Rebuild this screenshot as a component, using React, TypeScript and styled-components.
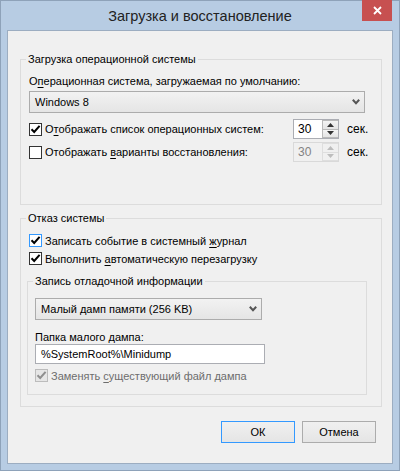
import styled, { createGlobalStyle } from "styled-components";

const GlobalStyle = createGlobalStyle`
  html, body {
    margin: 0;
    padding: 0;
    background: #ffffff;
  }
  body {
    font-family: "Liberation Sans", Arial, sans-serif;
    font-size: 11px;
    color: #000;
  }
  u {
    text-decoration-thickness: 1px;
    text-underline-offset: 2px;
  }
`;

const Window = styled.div`
  width: 400px;
  height: 471px;
  box-sizing: border-box;
  border: 1px solid #8ea2b9;
  background: #b7cce3;
  padding: 0 6px 6px;
  display: flex;
  flex-direction: column;
`;

const TitleBar = styled.div`
  height: 29px;
  display: grid;
  grid-template-columns: 1fr auto 1fr;
  align-items: center;
`;

const Title = styled.div`
  grid-column: 2;
  font-size: 14.5px;
  color: #222;
  padding-top: 1px;
`;

const CloseButton = styled.div`
  grid-column: 3;
  justify-self: end;
  align-self: start;
  margin: -1px 1px 0 0;
  width: 30px;
  height: 21px;
  background: #c75050;
  display: flex;
  align-items: center;
  justify-content: center;
`;

const Client = styled.div`
  flex: 1;
  border: 1px solid #9cadc1;
  background: #f0f0f0;
  padding: 20px 10px 0 12px;
  display: flex;
  flex-direction: column;
`;

const Group = styled.fieldset<{ $gap?: number }>`
  margin: ${(p) => p.$gap ?? 0}px 0 0;
  padding: 0;
  border: 1px solid #dcdcdc;
  min-width: 0;
`;

const Legend = styled.legend`
  margin-left: 5px;
  padding: 0 2px;
  height: 16px;
  line-height: 16px;
`;

const GroupBody = styled.div<{ $pad: string }>`
  padding: ${(p) => p.$pad};
  display: flex;
  flex-direction: column;
`;

const Label = styled.div<{ $top: number; $lh?: number }>`
  margin-top: ${(p) => p.$top}px;
  line-height: ${(p) => p.$lh ?? 16}px;
  white-space: nowrap;
`;

const Combo = styled.div<{ $top: number; $width?: number }>`
  margin-top: ${(p) => p.$top}px;
  height: 22px;
  box-sizing: border-box;
  width: ${(p) => (p.$width ? `${p.$width}px` : "auto")};
  border: 1px solid #acacac;
  background: linear-gradient(#f2f2f2, #e5e5e5);
  display: flex;
  align-items: center;
  padding: 0 4px 0 5px;
`;

const ComboText = styled.span`
  flex: 1;
  white-space: nowrap;
`;

const Row = styled.div<{ $top: number }>`
  margin-top: ${(p) => p.$top}px;
  height: 20px;
  display: flex;
  align-items: center;
`;

const CheckLine = styled.div<{ $top: number; $inset?: number; $disabled?: boolean }>`
  margin-top: ${(p) => p.$top}px;
  margin-left: ${(p) => p.$inset ?? 0}px;
  height: 16px;
  display: flex;
  align-items: center;
  gap: 3px;
  flex: 1;
  white-space: nowrap;
  color: ${(p) => (p.$disabled ? "#6d6d6d" : "#000")};
`;

const Box = styled.span<{ $focused?: boolean; $disabled?: boolean }>`
  width: 13px;
  height: 13px;
  box-sizing: border-box;
  flex: none;
  border: 1px solid
    ${(p) => (p.$disabled ? "#bcbcbc" : p.$focused ? "#3399ff" : "#333333")};
  background: ${(p) => (p.$disabled ? "#e6e6e6" : "#ffffff")};
  display: flex;
  align-items: center;
  justify-content: center;
`;

const Spinner = styled.div<{ $disabled?: boolean }>`
  width: 46px;
  height: 20px;
  box-sizing: border-box;
  flex: none;
  border: 1px solid ${(p) => (p.$disabled ? "#d9d9d9" : "#abadb3")};
  background: ${(p) => (p.$disabled ? "#f0f0f0" : "#ffffff")};
  color: ${(p) => (p.$disabled ? "#838383" : "#000")};
  display: flex;
  font-size: 12px;
`;

const SpinValue = styled.span`
  flex: 1;
  padding-left: 4px;
  line-height: 18px;
`;

const SpinButtons = styled.div`
  width: 16px;
  display: flex;
  flex-direction: column;
`;

const SpinButton = styled.div<{ $disabled?: boolean }>`
  flex: 1;
  border: 1px solid ${(p) => (p.$disabled ? "#dedede" : "#b9b9b9")};
  border-right: none;
  background: ${(p) =>
    p.$disabled ? "#f0f0f0" : "linear-gradient(#f4f4f4, #e4e4e4)"};
  display: flex;
  align-items: center;
  justify-content: center;
  & + & {
    border-top: none;
  }
`;

const Sec = styled.span`
  width: 26px;
  flex: none;
  padding-left: 8px;
  box-sizing: border-box;
  font-size: 12px;
`;

const TextBox = styled.div`
  width: 230px;
  height: 20px;
  box-sizing: border-box;
  border: 1px solid #abadb3;
  background: #ffffff;
  padding-left: 5px;
  line-height: 18px;
  white-space: nowrap;
`;

const ButtonRow = styled.div`
  margin-top: 14px;
  padding-right: 6px;
  display: flex;
  justify-content: flex-end;
  gap: 7px;
`;

const Button = styled.div<{ $default?: boolean }>`
  width: 74px;
  height: 22px;
  box-sizing: border-box;
  border: 1px solid ${(p) => (p.$default ? "#3399ff" : "#acacac")};
  background: linear-gradient(#f0f0f0, #e5e5e5);
  display: flex;
  align-items: center;
  justify-content: center;
`;

const Check = ({ color = "#000" }: { color?: string }) => (
  <svg width="11" height="11" viewBox="0 0 11 11">
    <path
      d="M1.5 5.2 L4.2 8 L9.6 1.8"
      fill="none"
      stroke={color}
      strokeWidth="2"
      strokeLinejoin="miter"
    />
  </svg>
);

const Chevron = () => (
  <svg width="8" height="6" viewBox="0 0 8 6">
    <path d="M0.8 0.8 L4 4.2 L7.2 0.8" fill="none" stroke="#555" strokeWidth="2" />
  </svg>
);

const Arrow = ({ up, color }: { up?: boolean; color: string }) => (
  <svg width="7" height="4" viewBox="0 0 7 4">
    <path d={up ? "M0 4 L3.5 0 L7 4 Z" : "M0 0 L3.5 4 L7 0 Z"} fill={color} />
  </svg>
);

function SpinBox({ value, disabled }: { value: string; disabled?: boolean }) {
  const c = disabled ? "#bdbdbd" : "#333";
  return (
    <Spinner $disabled={disabled}>
      <SpinValue>{value}</SpinValue>
      <SpinButtons>
        <SpinButton $disabled={disabled}>
          <Arrow up color={c} />
        </SpinButton>
        <SpinButton $disabled={disabled}>
          <Arrow color={c} />
        </SpinButton>
      </SpinButtons>
    </Spinner>
  );
}

export default function App() {
  return (
    <>
      <GlobalStyle />
      <Window>
        <TitleBar>
          <Title>Загрузка и восстановление</Title>
          <CloseButton>
            <svg width="9" height="9" viewBox="0 0 9 9">
              <path d="M1 1 L8 8 M8 1 L1 8" stroke="#fff" strokeWidth="1.8" />
            </svg>
          </CloseButton>
        </TitleBar>
        <Client>
          <Group>
            <Legend>Загрузка операционной системы</Legend>
            <GroupBody $pad="0 16px 42px 8px">
              <Label $top={6}>
                О<u>п</u>ерационная система, загружаемая по умолчанию:
              </Label>
              <Combo $top={2}>
                <ComboText>Windows 8</ComboText>
                <Chevron />
              </Combo>
              <Row $top={6}>
                <CheckLine $top={0}>
                  <Box>
                    <Check />
                  </Box>
                  <span>
                    О<u>т</u>ображать список операционных систем:
                  </span>
                </CheckLine>
                <SpinBox value="30" />
                <Sec>сек.</Sec>
              </Row>
              <Row $top={3}>
                <CheckLine $top={0}>
                  <Box />
                  <span>
                    Отображать <u>в</u>арианты восстановления:
                  </span>
                </CheckLine>
                <SpinBox value="30" disabled />
                <Sec>сек.</Sec>
              </Row>
            </GroupBody>
          </Group>

          <Group $gap={5}>
            <Legend>Отказ системы</Legend>
            <GroupBody $pad="0 14px 11px 6px">
              <CheckLine $top={8} $inset={2}>
                <Box $focused>
                  <Check />
                </Box>
                <span>
                  Записать событие в системный <u>ж</u>урнал
                </span>
              </CheckLine>
              <CheckLine $top={5} $inset={2}>
                <Box>
                  <Check />
                </Box>
                <span>
                  Выполнить <u>а</u>втоматическую перезагрузку
                </span>
              </CheckLine>
              <Group $gap={8}>
                <Legend>Запись отладочной информации</Legend>
                <GroupBody $pad="0 0 12px 7px">
                  <Combo $top={9} $width={227}>
                    <ComboText>Малый дамп памяти (256 KB)</ComboText>
                    <Chevron />
                  </Combo>
                  <Label $top={10} $lh={14}>
                    Папка малого дампа:
                  </Label>
                  <TextBox>%SystemRoot%\Minidump</TextBox>
                  <CheckLine $top={5} $disabled>
                    <Box $disabled>
                      <Check color="#8f8f8f" />
                    </Box>
                    <span>
                      Заменять <u>с</u>уществующий файл дампа
                    </span>
                  </CheckLine>
                </GroupBody>
              </Group>
            </GroupBody>
          </Group>

          <ButtonRow>
            <Button $default>ОК</Button>
            <Button>Отмена</Button>
          </ButtonRow>
        </Client>
      </Window>
    </>
  );
}
